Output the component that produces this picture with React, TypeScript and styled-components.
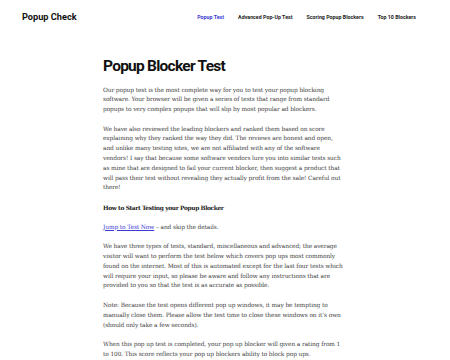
import React from "react";
import styled, { createGlobalStyle } from "styled-components";

const Global = createGlobalStyle`
  html, body { margin: 0; padding: 0; background: #fff; }
  body { font-family: "DejaVu Serif", serif; }
`;

const Page = styled.div`
  width: 450px;
  min-height: 360px;
  background: #fff;
  overflow: hidden;
`;

const Header = styled.header`
  display: flex;
  align-items: center;
  justify-content: space-between;
  height: 33px;
  padding: 0 34px 0 22px;
`;

const Brand = styled.div`
  font-family: "Roboto", sans-serif;
  font-weight: 700;
  font-size: 9.2px;
  color: #111;
`;

const Nav = styled.nav`
  display: flex;
  gap: 14px;
`;

const NavItem = styled.a<{ $active?: boolean }>`
  font-family: "Roboto", sans-serif;
  font-weight: 700;
  font-size: 5.3px;
  color: ${(p) => (p.$active ? "#3b3bd6" : "#222")};
  text-decoration: none;
`;

const Main = styled.main`
  width: 242px;
  margin: 0 0 0 103px;
  padding-top: 23px;
`;

const Title = styled.h1`
  margin: 0 0 9.5px;
  font-family: "Roboto", sans-serif;
  font-weight: 700;
  font-size: 15.5px;
  line-height: 20px;
  color: #111;
  letter-spacing: -0.75px;
`;

const P = styled.p<{ $strong?: boolean }>`
  margin: 0 0 9.8px;
  font-size: 5.9px;
  line-height: 9.8px;
  white-space: nowrap;
  color: ${(p) => (p.$strong ? "#222" : "#444")};
  font-weight: ${(p) => (p.$strong ? 700 : 400)};
  letter-spacing: ${(p) => (p.$strong ? "-0.38px" : "-0.12px")};
`;

const Line = styled.span`
  display: block;
`;

const Link = styled.a`
  color: #3b3bd6;
  text-decoration: underline;
`;

const paragraphs: string[][] = [
  [
    "Our popup test is the most complete way for you to test your popup blocking",
    "software. Your browser will be given a series of tests that range from standard",
    "popups to very complex popups that will slip by most popular ad blockers.",
  ],
  [
    "We have also reviewed the leading blockers and ranked them based on score",
    "explaining why they ranked the way they did. The reviews are honest and open,",
    "and unlike many testing sites, we are not affiliated with any of the software",
    "vendors! I say that because some software vendors lure you into similar tests such",
    "as mine that are designed to fail your current blocker, then suggest a product that",
    "will pass their test without revealing they actually profit from the sale! Careful out",
    "there!",
  ],
];

const paragraphs2: string[][] = [
  [
    "We have three types of tests, standard, miscellaneous and advanced; the average",
    "visitor will want to perform the test below which covers pop ups most commonly",
    "found on the internet. Most of this is automated except for the last four tests which",
    "will require your input, so please be aware and follow any instructions that are",
    "provided to you so that the test is as accurate as possible.",
  ],
  [
    "Note: Because the test opens different pop up windows, it may be tempting to",
    "manually close them. Please allow the test time to close these windows on it’s own",
    "(should only take a few seconds).",
  ],
  [
    "When this pop up test is completed, your pop up blocker will given a rating from 1",
    "to 100. This score reflects your pop up blockers ability to block pop ups.",
  ],
];

const Para = ({ lines }: { lines: string[] }) => (
  <P>
    {lines.map((l, i) => (
      <Line key={i}>{l}</Line>
    ))}
  </P>
);

export default function App() {
  return (
    <Page>
      <Global />
      <Header>
        <Brand>Popup Check</Brand>
        <Nav>
          <NavItem $active>Popup Test</NavItem>
          <NavItem>Advanced Pop-Up Test</NavItem>
          <NavItem>Scoring Popup Blockers</NavItem>
          <NavItem>Top 10 Blockers</NavItem>
        </Nav>
      </Header>
      <Main>
        <Title>Popup Blocker Test</Title>
        {paragraphs.map((p, i) => (
          <Para key={i} lines={p} />
        ))}
        <P $strong>How to Start Testing your Popup Blocker</P>
        <P>
          <Link>Jump to Test Now</Link> – and skip the details.
        </P>
        {paragraphs2.map((p, i) => (
          <Para key={i} lines={p} />
        ))}
      </Main>
    </Page>
  );
}
